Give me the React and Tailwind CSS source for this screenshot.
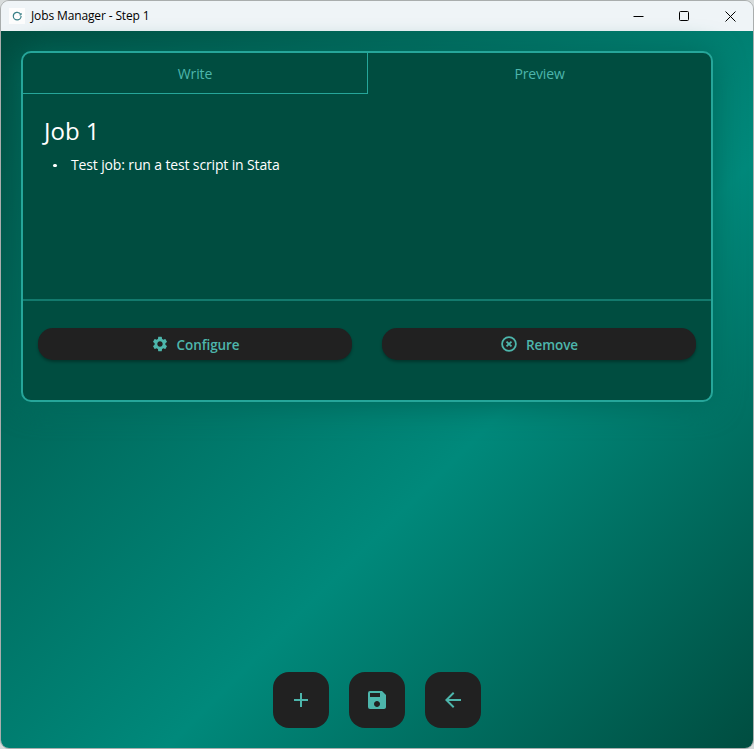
import { MdAdd, MdArrowBack, MdSave, MdSettings } from "react-icons/md";

function TitleBar() {
  return (
    <header className="flex h-[30px] shrink-0 items-center bg-[#eff4f7] pl-2 text-black">
      <span className="flex size-4 items-center justify-center bg-[#fdfdfd]">
        <svg viewBox="0 0 16 16" className="size-4" fill="none" stroke="#3a8088" strokeWidth="1.2">
          <path d="M11.700 6.500A3.900 3.900 0 0 0 4.300 8" />
          <path d="M4.300 8a3.900 3.900 0 0 0 7.800 0" />
          <path d="M12.100 5v2h-1.600" strokeWidth="1" />
        </svg>
      </span>
      <h1 className="ml-1.5 text-[12px] leading-4 tracking-[-0.13px]">Jobs Manager - Step 1</h1>
      <div className="ml-auto flex h-full">
        <span className="flex w-[46px] items-center justify-center">
          <svg className="mr-px size-[11px]" viewBox="0 0 11 11" stroke="#000" fill="none"><path d="M.5 5.500h10" /></svg>
        </span>
        <span className="flex w-[45px] items-center justify-center">
          <svg className="size-[11px]" viewBox="0 0 11 11" stroke="#000" fill="none"><rect x=".5" y=".5" width="9" height="9" rx="1" /></svg>
        </span>
        <span className="flex w-[46px] items-center justify-center">
          <svg className="size-[11px]" viewBox="0 0 11 11" stroke="#000" fill="none"><path d="M.5.5l10 10M10.500.5l-10 10" /></svg>
        </span>
      </div>
    </header>
  );
}

function RemoveIcon({ className }) {
  return (
    <svg viewBox="0 0 24 24" className={className} fill="none" stroke="currentColor" strokeWidth="2.400">
      <circle cx="12" cy="12" r="9.200" />
      <path d="M8.700 8.700l6.600 6.600M15.300 8.700l-6.600 6.600" />
    </svg>
  );
}

function PillButton({ icon: Icon, children }) {
  return (
    <button className="flex h-8 flex-1 items-center justify-center gap-2 rounded-[15px] bg-[#212121] text-[13.500px] font-semibold tracking-[-0.08px] text-[#4db6ac] shadow-[0_2px_3px_rgba(0,0,0,0.3)]">
      <Icon className="size-[18px]" />
      <span className="pt-0.5 leading-5">{children}</span>
    </button>
  );
}

function SquareButton({ icon: Icon, label }) {
  return (
    <button aria-label={label} className="flex size-14 items-center justify-center rounded-2xl bg-[#212121] text-[#4db6ac]">
      <Icon className="size-6" />
    </button>
  );
}

function JobCard() {
  return (
    <section className="flex h-[351px] w-[692px] flex-col rounded-[10px] border-2 border-[#26a69a] bg-[#004d40] shadow-[0_3px_30px_#00695c]">
      <div className="flex h-[41px] shrink-0 text-[14px] tracking-[-0.15px] text-[#4db6ac]">
        <div className="flex w-[345px] items-center justify-center border-r border-b border-[#26a69a] pt-px">Write</div>
        <div className="flex flex-1 items-center justify-center">Preview</div>
      </div>
      <div className="flex-1 px-5 pt-[21px] text-white">
        <h2 className="pl-px text-[24px] leading-8">Job 1</h2>
        <ul className="mt-2 text-[14px] leading-5 tracking-[-0.14px]">
          <li className="flex">
            <span className="flex w-7 items-center pl-[10px] pt-px"><i className="size-[3.500px] rounded-full bg-white" /></span>
            <span>Test job: run a test script in Stata</span>
          </li>
        </ul>
      </div>
      <div className="flex h-[101px] shrink-0 gap-[30px] border-t-2 border-[#137a6d] px-[15px] pt-[27px]">
        <PillButton icon={MdSettings}>Configure</PillButton>
        <PillButton icon={RemoveIcon}>Remove</PillButton>
      </div>
    </section>
  );
}

export default function App() {
  return (
    <div className="h-[749px] w-[754px] bg-[#d8dcdc] font-['Open_Sans','Noto_Sans',sans-serif]">
      <div className="flex h-full flex-col overflow-hidden rounded-[9px] border border-[#a9adad]">
        <TitleBar />
        <main className="flex flex-1 flex-col bg-[linear-gradient(135deg,#004d40_0%,#00897b_60%,#004d40_100%)] px-5 pt-5 pb-5">
          <JobCard />
          <nav className="mt-auto flex justify-center gap-5">
            <SquareButton icon={MdAdd} label="Add job" />
            <SquareButton icon={MdSave} label="Save" />
            <SquareButton icon={MdArrowBack} label="Back" />
          </nav>
        </main>
      </div>
    </div>
  );
}
